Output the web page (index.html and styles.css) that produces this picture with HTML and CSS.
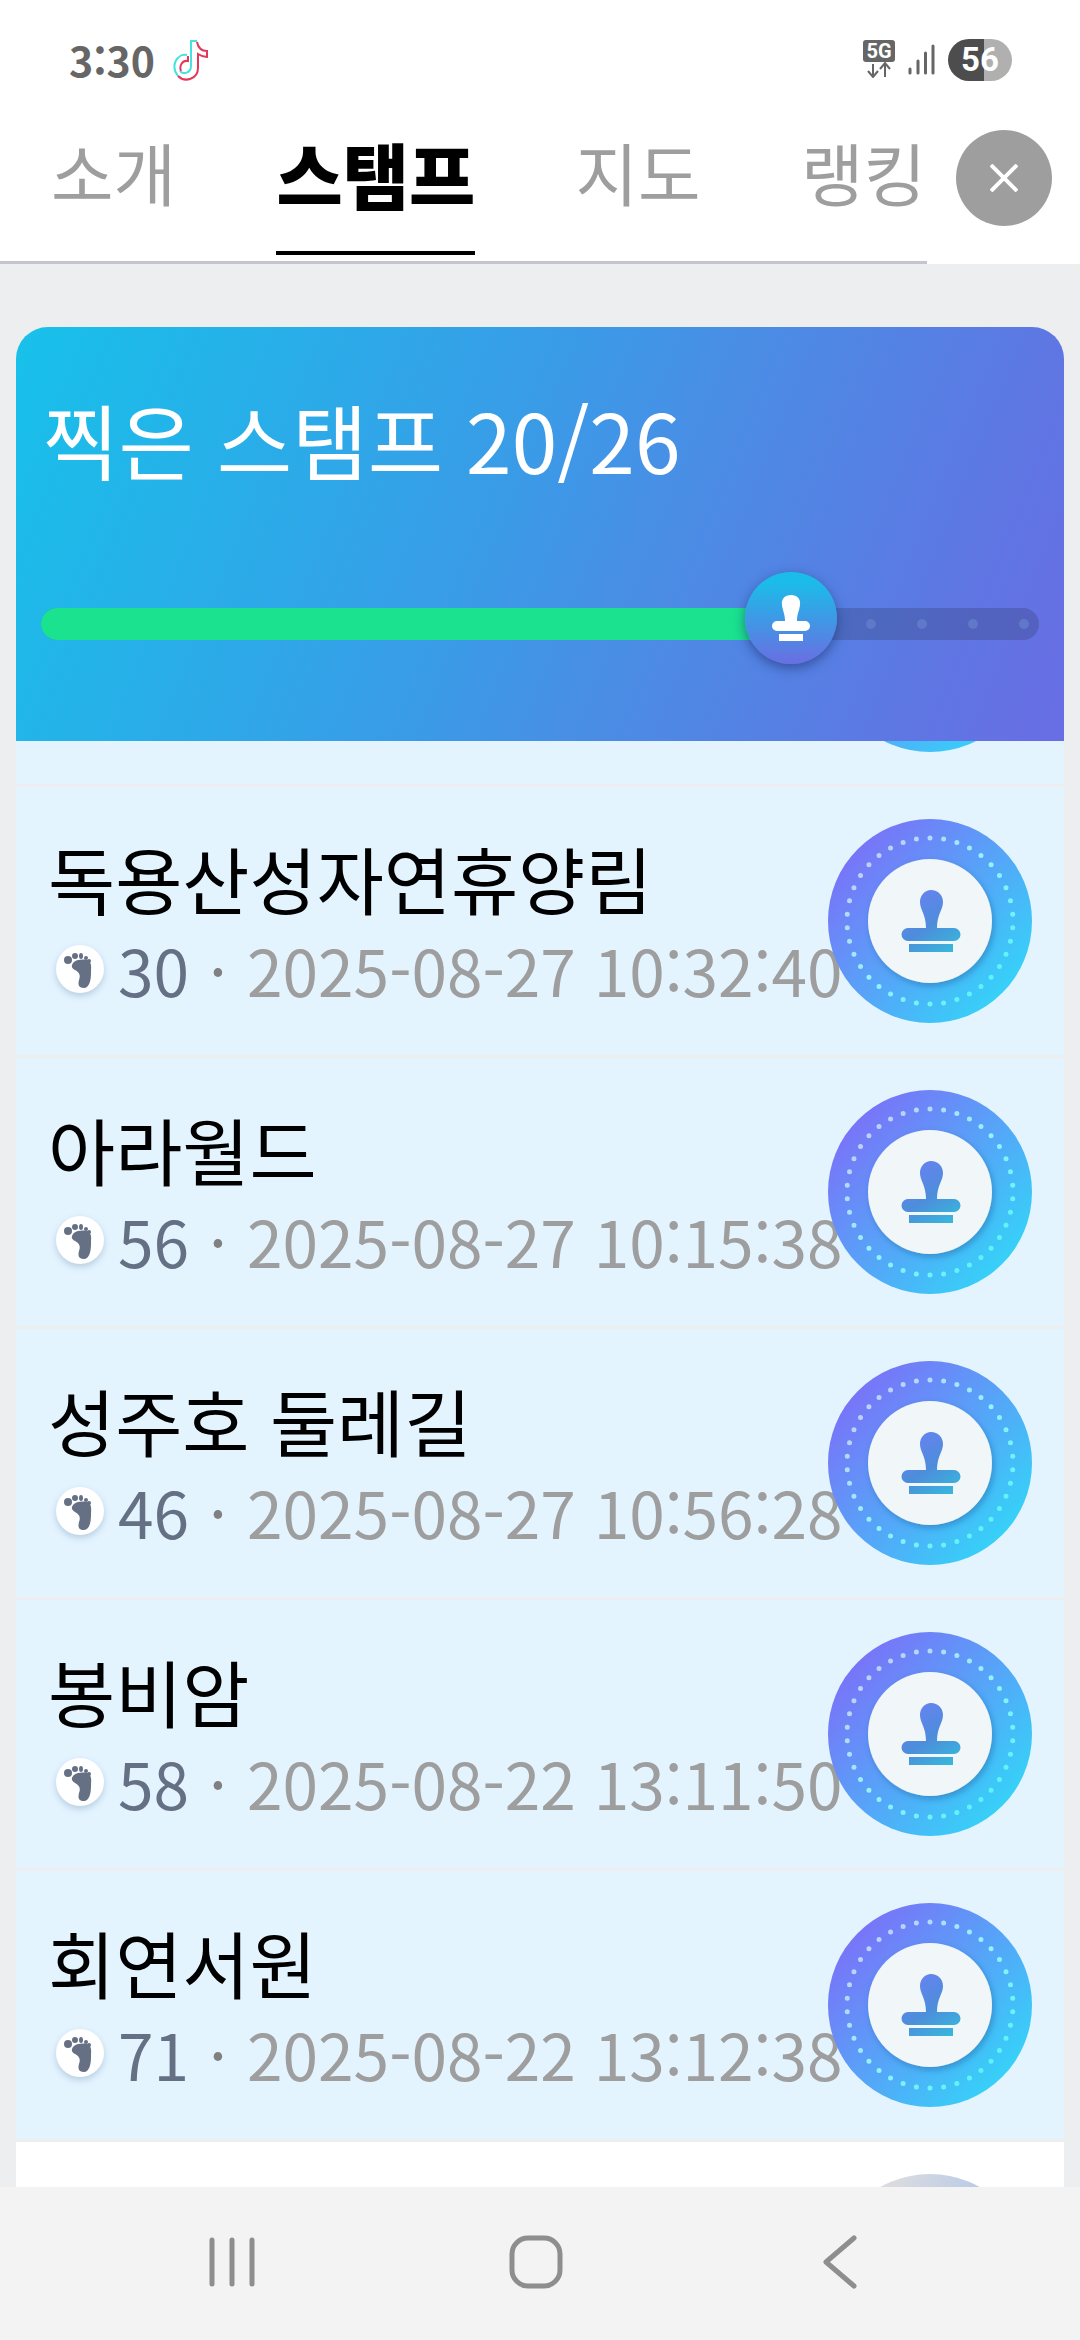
FILE: index.html
```html
<!DOCTYPE html>
<html lang="ko">
<head>
<meta charset="utf-8">
<meta name="viewport" content="width=device-width, initial-scale=1">
<title>스탬프</title>
<link rel="stylesheet" href="styles.css">
</head>
<body>
<svg class="defs" aria-hidden="true">
  <defs>
    <linearGradient id="ring" x1="0.1" y1="0.15" x2="0.85" y2="0.85">
      <stop offset="0" stop-color="#7a72f8"/>
      <stop offset="1" stop-color="#37d0f8"/>
    </linearGradient>
    <linearGradient id="dots" x1="0.9" y1="0.1" x2="0.1" y2="0.9">
      <stop offset="0" stop-color="#c0cdfb"/>
      <stop offset="0.5" stop-color="#95f3fd"/>
      <stop offset="1" stop-color="#55f3fc"/>
    </linearGradient>
    <linearGradient id="seal" gradientUnits="userSpaceOnUse" x1="88" y1="78" x2="122" y2="132">
      <stop offset="0" stop-color="#6484ee"/>
      <stop offset="0.5" stop-color="#4d8ddb"/>
      <stop offset="1" stop-color="#38b6dc"/>
    </linearGradient>
    <linearGradient id="off" x1="0.1" y1="0.1" x2="0.9" y2="0.5">
      <stop offset="0.100" stop-color="#e0dede"/>
      <stop offset="0.700" stop-color="#b4c9e8"/>
    </linearGradient>
    <filter id="soft" x="-20%" y="-20%" width="140%" height="140%">
      <feDropShadow dx="2" dy="3" stdDeviation="3" flood-color="#1c4f90" flood-opacity="0.4"/>
    </filter>
    <symbol id="stamp" viewBox="0 0 204 204">
      <circle cx="102" cy="102" r="102" fill="url(#ring)"/>
      <circle cx="102" cy="102" r="83" fill="none" stroke="url(#dots)" stroke-width="5" stroke-linecap="round" pathLength="380" stroke-dasharray="0 10" transform="rotate(-90 102 102)"/>
      <circle cx="102" cy="102" r="62" fill="#f1f6f8" filter="url(#soft)"/>
      <path fill="url(#seal)" d="M103 71c7 0 12 5 12 12 0 8-6 12-6 26h17a6.500 6.500 0 0 1 0 13H80a6.500 6.500 0 0 1 0-13h18c0-14-6-18-6-26 0-7 5-12 11-12zM81 125h44v8H81z"/>
    </symbol>
    <symbol id="foot" viewBox="0 0 48 48">
      <path fill="#667085" d="M18 17c4-3 12-3 15-1 3 3 2 7 2 12 0 8-2 15-7 15-6 0-6-4-5-8 2-5 0-8-4-10-4-2-4-5-1-8z"/>
      <ellipse cx="12" cy="15" rx="4" ry="4" fill="#667085"/>
      <ellipse cx="19" cy="11" rx="3" ry="3" fill="#667085"/>
      <ellipse cx="25" cy="11" rx="2" ry="3" fill="#667085"/>
      <circle cx="30" cy="13" r="2" fill="#667085"/>
      <circle cx="33" cy="16" r="2" fill="#667085"/>
    </symbol>
  </defs>
</svg>
<div class="screen">
  <header class="status">
    <span class="time">3:30</span>
    <svg class="note" viewBox="0 0 36 42" aria-hidden="true">
      <path d="M15 16C5 14-2 27 6 37M19 2v25c0 7-8 9-11 5M18 2h7" fill="none" stroke="#45e3e0" stroke-width="2"/>
      <path d="M25 3c1 5 4 9 10 9v6c-4 0-6-1-9-3v14c0 11-13 15-20 8M16 17v5c-6-1-9 5-7 10" fill="none" stroke="#e5375c" stroke-width="2"/>
    </svg>
    <div class="signals">
      <svg class="net" viewBox="0 0 34 38" role="img" aria-label="5G">
        <rect x="1" y="0" width="32" height="22" rx="3" fill="#666"/>
        <text x="17" y="18" class="net-label">5G</text>
        <path d="M11 24v12M6 31l5 6 5-6M23 37V24M18 29l5-6 5 6" fill="none" stroke="#666" stroke-width="2"/>
      </svg>
      <svg class="bars" viewBox="0 0 28 32" aria-hidden="true">
        <path d="M2 25v4M10 17v12M17.500 9v20M25 2v27" stroke="#666" stroke-width="3" stroke-linecap="round"/>
      </svg>
      <span class="battery">56</span>
    </div>
  </header>
  <div class="top">
    <nav class="tabs">
      <a href="#intro" class="tab">소개</a>
      <a href="#stamp" class="tab active" aria-current="page">스탬프</a>
      <a href="#map" class="tab">지도</a>
      <a href="#ranking" class="tab">랭킹</a>
    </nav>
    <button class="close" type="button" aria-label="닫기">
      <svg viewBox="0 0 28 28" aria-hidden="true"><path d="M1 1l26 26M27 1L1 27" stroke="#fff" stroke-width="4"/></svg>
    </button>
  </div>
  <main class="main">
    <section class="summary">
      <h1>찍은 스탬프 20/26</h1>
      <div class="track">
        <div class="fill" style="width: 75%"></div>
        <i></i><i></i><i></i><i></i>
        <span class="knob">
          <svg viewBox="0 0 38 48" aria-hidden="true"><path fill="#fff" d="M19 1c6 0 10 4 9 10-1 7-3 9-3 16h8a5 5 0 0 1 0 10H5a5 5 0 0 1 0-10h8c0-7-2-9-3-16-1-6 3-10 9-10zM7 40h24v7H7z"/></svg>
        </span>
      </div>
    </section>
    <div class="viewport">
      <ul class="list">
        <li class="row"><div class="info"></div><svg class="stamp"><use href="#stamp"/></svg></li>
        <li class="row">
          <div class="info"><h2>독용산성자연휴양림</h2>
            <p class="meta"><span class="foot"><svg><use href="#foot"/></svg></span><b>30</b><span class="sep">·</span><time>2025-08-27 10:32:40</time></p></div>
          <svg class="stamp"><use href="#stamp"/></svg>
        </li>
        <li class="row">
          <div class="info"><h2>아라월드</h2>
            <p class="meta"><span class="foot"><svg><use href="#foot"/></svg></span><b>56</b><span class="sep">·</span><time>2025-08-27 10:15:38</time></p></div>
          <svg class="stamp"><use href="#stamp"/></svg>
        </li>
        <li class="row">
          <div class="info"><h2>성주호 둘레길</h2>
            <p class="meta"><span class="foot"><svg><use href="#foot"/></svg></span><b>46</b><span class="sep">·</span><time>2025-08-27 10:56:28</time></p></div>
          <svg class="stamp"><use href="#stamp"/></svg>
        </li>
        <li class="row">
          <div class="info"><h2>봉비암</h2>
            <p class="meta"><span class="foot"><svg><use href="#foot"/></svg></span><b>58</b><span class="sep">·</span><time>2025-08-22 13:11:50</time></p></div>
          <svg class="stamp"><use href="#stamp"/></svg>
        </li>
        <li class="row">
          <div class="info"><h2>회연서원</h2>
            <p class="meta"><span class="foot"><svg><use href="#foot"/></svg></span><b>71</b><span class="sep">·</span><time>2025-08-22 13:12:38</time></p></div>
          <svg class="stamp"><use href="#stamp"/></svg>
        </li>
        <li class="row empty"><div class="info"></div><svg class="stamp" viewBox="0 0 204 204"><circle cx="102" cy="102" r="102" fill="url(#off)"/></svg></li>
      </ul>
    </div>
  </main>
  <footer class="system">
    <button type="button" aria-label="최근 앱"><svg viewBox="0 0 56 56"><path d="M8 6v44M28 6v44M48 6v44"/></svg></button>
    <button type="button" aria-label="홈"><svg viewBox="0 0 56 56"><rect x="4" y="4" width="48" height="48" rx="16"/></svg></button>
    <button type="button" aria-label="뒤로"><svg viewBox="0 0 56 56"><path d="M42 4L14 28l28 24"/></svg></button>
  </footer>
</div>
</body>
</html>
```
FILE: styles.css
```css
* { box-sizing: border-box; margin: 0; padding: 0; }
body { font-family: "Noto Sans CJK KR", "Noto Sans", sans-serif; background: #edeef0; color: #000; }
.defs { position: absolute; width: 0; height: 0; }
svg { display: block; }
.screen { display: flex; flex-direction: column; height: 100vh; overflow: hidden; }

.status { display: flex; align-items: center; height: 120px; padding: 0 68px 0 69px; background: #fff; flex: none; }
.time { font-weight: 700; font-size: 41px; line-height: 40px; padding-bottom: 3px; color: #666; }
.note { width: 36px; height: 42px; margin-left: 17px; }
.signals { display: flex; align-items: center; gap: 12px; margin-left: auto; }
.net { width: 34px; height: 38px; margin-bottom: 2px; }
.net-label { font: 700 20px "Roboto", sans-serif; fill: #fff; text-anchor: middle; }
.bars { width: 28px; height: 32px; }
.battery { width: 64px; height: 42px; border-radius: 21px; background: linear-gradient(90deg, #4d4d4d 36px, #b0b0b0 36px); color: #fff; font: 700 33px/42px "Roboto", sans-serif; text-align: center; }

.top { display: flex; background: #fff; flex: none; }
.tabs { flex: 1; display: flex; justify-content: space-between; padding: 0 1px 0 51px; height: 144px; border-bottom: 3px solid #c8c4cc; }
.tab { height: 135px; font-size: 68px; line-height: 104px; color: #9e9e9e; text-decoration: none; white-space: nowrap; }
.tab.active { font-size: 72px; line-height: 106px; font-weight: 900; color: #000; border-bottom: 4px solid #000; }
.close { width: 96px; height: 96px; margin: 10px 28px 0 29px; border: 0; border-radius: 50%; background: #9e9e9e; display: grid; place-items: center; }
.close svg { width: 28px; height: 28px; }

.main { flex: 1; min-height: 0; display: flex; flex-direction: column; padding: 63px 16px 0; }
.summary { flex: none; height: 414px; padding: 52px 25px 0; border-radius: 32px 32px 0 0; background: linear-gradient(112deg, #17c1ea, #3a9be7 46%, #4a8de5 61%, #5e77e3 86%, #696de4); }
.summary h1 { padding-left: 2px; font-size: 82px; font-weight: 400; line-height: 120px; color: #fff; white-space: nowrap; }
.track { position: relative; display: flex; align-items: center; justify-content: flex-end; gap: 41px; height: 32px; margin-top: 109px; padding-right: 10px; border-radius: 16px; background: rgba(50, 60, 110, 0.3); }
.track i { width: 10px; height: 10px; border-radius: 50%; background: #6078c8; }
.fill { position: absolute; left: 0; top: 0; height: 100%; border-radius: 16px 0 0 16px; background: #1ae28f; }
.knob { position: absolute; left: 75%; top: -36px; width: 92px; height: 92px; margin-left: -45px; border-radius: 50%; background: linear-gradient(#1abde9 10%, #6a6ee2); box-shadow: 0 4px 12px rgba(30, 50, 110, 0.6); display: grid; place-items: center; }
.knob svg { width: 38px; height: 48px; }

.viewport { flex: 1; min-height: 0; overflow: hidden; }
.list { list-style: none; margin-top: -225px; }
.row { display: flex; align-items: center; padding: 32px; border-bottom: 3px solid #edeef0; background: #e3f4ff; }
.row.empty { background: #fff; }
.info { flex: 1; min-width: 0; white-space: nowrap; }
.info h2 { font-size: 73px; font-weight: 400; line-height: 96px; }
.stamp { flex: none; width: 204px; height: 204px; }
.meta { display: flex; align-items: center; font-size: 64px; line-height: 88px; color: #9e9e9e; }
.meta b { font-weight: 400; color: #667085; margin-left: 14px; }
.sep { flex: none; width: 58px; text-align: center; color: #808080; }
.foot { flex: none; width: 48px; height: 48px; margin-left: 8px; border-radius: 50%; background: #fff; box-shadow: 0 3px 6px rgba(60, 90, 130, 0.25); }
.foot svg { width: 48px; height: 48px; }

.system { flex: none; height: 153px; padding: 0 88px 4px 80px; display: flex; justify-content: space-around; align-items: center; background: #f3f3f3; }
.system button { border: 0; background: none; }
.system svg { width: 56px; height: 56px; fill: none; stroke: #8e8e8e; stroke-width: 5; stroke-linecap: round; stroke-linejoin: round; }
```
